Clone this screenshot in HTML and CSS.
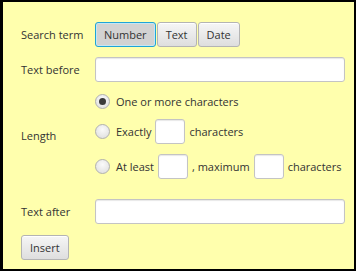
FILE: index.html
```html
<!DOCTYPE html>
<html lang="en">
<head>
    <meta charset="UTF-8">
    <title>Insert search term</title>
    <link rel="stylesheet" href="styles.css">
</head>
<body>

    <div class="panel">

        <div class="form">
            <label class="label">Search term</label>
            <div class="toggle-group">
                <button class="toggle selected">Number</button>
                <button class="toggle">Text</button>
                <button class="toggle">Date</button>
            </div>

            <label class="label">Text before</label>
            <input class="field" type="text">

            <label class="label length-label">Length</label>
            <div class="radio-group">
                <div class="radio-row first">
                    <span class="radio checked"></span>
                    <span>One or more characters</span>
                </div>
                <div class="radio-row">
                    <span class="radio"></span>
                    <span>Exactly</span>
                    <input class="field small" type="text">
                    <span>characters</span>
                </div>
                <div class="radio-row">
                    <span class="radio"></span>
                    <span>At least</span>
                    <input class="field small" type="text">
                    <span>, maximum</span>
                    <input class="field small" type="text">
                    <span>characters</span>
                </div>
            </div>

            <label class="label after-label">Text after</label>
            <input class="field after-field" type="text">
        </div>

        <button class="btn">Insert</button>

    </div>

</body>
</html>
```

FILE: styles.css
```css
* { box-sizing: border-box; margin: 0; padding: 0; font-family: "Open Sans", Lato, sans-serif; }
body {
    background: #000;
}
.panel {
    width: 356px;
    height: 271px;
    background: #ffffad;
    border-style: solid;
    border-color: #000;
    border-width: 2px 2px 2px 3px;
    padding: 20px 9px 0 18px;
    font-size: 11px;
    color: #333;
}
.form {
    display: grid;
    grid-template-columns: 74px 1fr;
    align-items: center;
    row-gap: 10px;
}
.label {
    font-size: 11px;
    color: #333;
}
.toggle-group {
    display: flex;
    gap: 1px;
}
.toggle {
    height: 25px;
    padding: 0 8px;
    font-size: 11px;
    color: #333;
    border: 1px solid #b4b4b4;
    border-radius: 3px;
    background: linear-gradient(#f6f6f6, #dedede);
    box-shadow: inset 0 1px 0 #fff;
}
.toggle.selected {
    background: #d2d2d2;
    border-color: #1fa4d6;
    box-shadow: inset 0 0 0 1px #c6e6f3;
}
.field {
    height: 25px;
    background: #fff;
    border: 1px solid #c4c4c4;
    border-radius: 3px;
    box-shadow: inset 0 1px 1px #e8e8e8;
    font-size: 11px;
}
.radio-group {
    display: flex;
    flex-direction: column;
    gap: 10px;
}
.radio-row {
    display: flex;
    align-items: center;
    gap: 4px;
    height: 25px;
}
.radio-row.first {
    height: 18px;
    margin-bottom: -1px;
}
.radio {
    width: 15px;
    height: 15px;
    margin-right: 2px;
    border-radius: 50%;
    border: 1px solid #b0b0b0;
    background: radial-gradient(circle at 50% 35%, #fafafa, #dcdcdc);
    display: flex;
    align-items: center;
    justify-content: center;
}
.radio.checked::after {
    content: "";
    width: 7px;
    height: 7px;
    border-radius: 50%;
    background: #3a3a3a;
}
.field.small {
    width: 30px;
}
.after-label,
.after-field {
    margin-top: 10px;
}
.btn {
    margin-top: 11px;
    height: 25px;
    padding: 0 8px;
    font-size: 11px;
    color: #333;
    border: 1px solid #b4b4b4;
    border-radius: 3px;
    background: linear-gradient(#f6f6f6, #dedede);
    box-shadow: inset 0 1px 0 #fff;
}
```
